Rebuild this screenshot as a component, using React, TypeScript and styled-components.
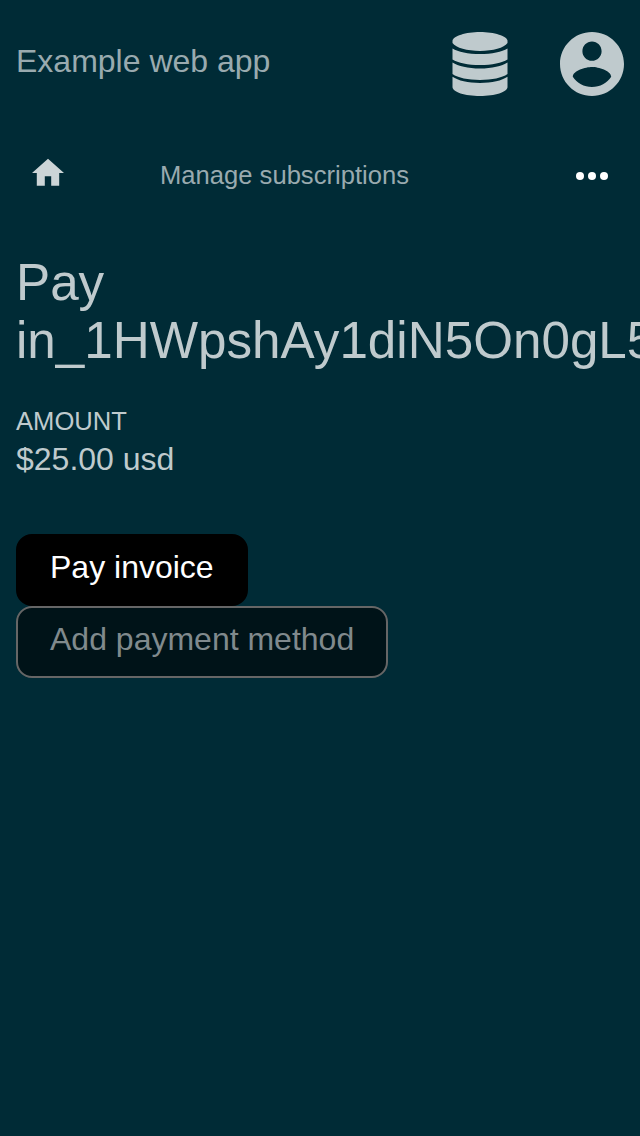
import React from "react";
import styled, { createGlobalStyle } from "styled-components";

const Global = createGlobalStyle`
  * { box-sizing: border-box; }
  html, body { margin: 0; background: #002b36; overflow-x: hidden; }
  body { font-family: "Liberation Sans", Arial, sans-serif; color: #bfcacd; }
  svg { display: block; fill: currentColor; }
`;
const Page = styled.div`
  min-height: 1136px;
  width: 640px;
  overflow: hidden;
  background: #002b36;
`;
const Header = styled.header`
  height: 128px;
  padding: 0 16px;
  display: flex;
  align-items: center;
`;
const AppName = styled.a`
  flex: 1;
  font-size: 32px;
  line-height: 36px;
  padding-bottom: 6px;
  color: #99aaaf;
`;
const HeaderIcons = styled.div`
  display: flex;
  gap: 48px;
`;
const Nav = styled.nav`
  height: 96px;
  display: flex;
  align-items: center;
  padding: 0 32px;
`;
const HomeLink = styled.a`
  width: 128px;
  padding-bottom: 8px;
  color: #ccd5d7;
`;
const NavLink = styled.a`
  flex: 1;
  font-size: 25.6px;
  line-height: 30px;
  padding-bottom: 2px;
  color: #99aaaf;
`;
const MoreButton = styled.span`
  color: #fff;
`;
const Main = styled.main`
  padding: 30px 16px 0;
`;
const Title = styled.h1`
  margin: 0;
  font-size: 51.2px;
  font-weight: 400;
  line-height: 58px;
`;
const Field = styled.dl`
  margin: 36px 0 0;
`;
const Label = styled.dt`
  font-size: 25.6px;
  line-height: 30px;
  text-transform: uppercase;
`;
const Value = styled.dd`
  margin: 5px 0 0;
  font-size: 32px;
  line-height: 36px;
`;
const Actions = styled.div`
  display: flex;
  flex-direction: column;
  align-items: flex-start;
  margin-top: 57px;
`;
const Button = styled.button<{ $muted?: boolean }>`
  height: 72px;
  padding: 0 32px 5px;
  border: 2px solid ${(p) => (p.$muted ? "#666" : "#000")};
  border-radius: 16px;
  font: 32px "Liberation Sans", Arial, sans-serif;
  color: ${(p) => (p.$muted ? "#808a8d" : "#fff")};
  background: ${(p) => (p.$muted ? "#001318" : "#000")};
`;

export default function App() {
  return (
    <>
      <Global />
      <Page>
        <Header>
          <AppName>Example web app</AppName>
          <HeaderIcons>
            <svg width="64" height="64" viewBox="0 0 64 64">
              <path d="M32 0C46 0 59.500 4 59.500 9V11C56 16 45 18.900 32 18.900S8 16 4.500 11V9C4.500 4 18 0 32 0Z" />
              <path d="M4.500 16.500C10 20 20 22.100 32 22.100S54 20 59.500 16.500V27.500C54 31 44 33 32 33S10 31 4.500 27.500Z" />
              <path d="M4.500 30.500C10 34 20 36.500 32 36.500S54 34 59.500 30.500V42C54 46 44 47.900 32 47.900S10 46 4.500 42Z" />
              <path d="M4.500 44.700C10 48.500 20 50.900 32 50.900S54 48.500 59.500 44.700V55C59.500 60 47 64 32 64S4.500 60 4.500 55Z" />
            </svg>
            <svg width="64" height="64" viewBox="2 2 20 20">
              <path d="M12 2C6.480 2 2 6.480 2 12s4.480 10 10 10 10-4.480 10-10S17.520 2 12 2zm0 3c1.660 0 3 1.340 3 3s-1.340 3-3 3-3-1.340-3-3 1.340-3 3-3zm0 14.200c-2.500 0-4.710-1.280-6-3.220.03-1.990 4-3.080 6-3.080 1.990 0 5.970 1.090 6 3.080-1.290 1.940-3.500 3.220-6 3.220z" />
            </svg>
          </HeaderIcons>
        </Header>
        <Nav>
          <HomeLink>
            <svg width="32" height="28" viewBox="2 2.6 20 17.5"><path d="M10 20v-6h4v6h5v-8h3L12 3 2 12h3v8z" /></svg>
          </HomeLink>
          <NavLink>Manage subscriptions</NavLink>
          <MoreButton>
            <svg width="32" height="8" viewBox="0 0 32 8"><circle cx="4" cy="4" r="4" /><circle cx="16" cy="4" r="4" /><circle cx="28" cy="4" r="4" /></svg>
          </MoreButton>
        </Nav>
        <Main>
          <Title>Pay in_1HWpshAy1diN5On0gL5</Title>
          <Field>
            <Label>Amount</Label>
            <Value>$25.00 usd</Value>
          </Field>
          <Actions>
            <Button>Pay invoice</Button>
            <Button $muted>Add payment method</Button>
          </Actions>
        </Main>
      </Page>
    </>
  );
}
